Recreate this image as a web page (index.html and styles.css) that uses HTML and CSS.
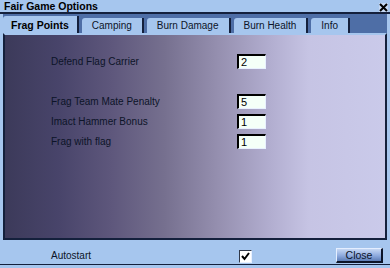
FILE: index.html
```html
<!DOCTYPE html>
<html lang="en">

<head>
    <meta charset="UTF-8">
    <meta name="viewport" content="width=device-width, initial-scale=1.0">
    <title>Fair Game Options</title>
    <link rel="stylesheet" href="styles.css">
</head>

<body>
    <div class="window">
        <div class="titlebar">
            <span class="title">Fair Game Options</span>
            <span class="close-x">
                <svg width="9" height="9" viewBox="0 0 9 9">
                    <path d="M1 1 L8 8 M8 1 L1 8" stroke="#000" stroke-width="2" fill="none" />
                </svg>
            </span>
        </div>
        <div class="frame">
            <div class="tabs">
                <div class="tab active">Frag Points</div>
                <div class="tab">Camping</div>
                <div class="tab">Burn Damage</div>
                <div class="tab">Burn Health</div>
                <div class="tab">Info</div>
            </div>
            <div class="panel">
                <div class="row">
                    <span class="label">Defend Flag Carrier</span>
                    <input class="field" type="text" value="2">
                </div>
                <div class="spacer"></div>
                <div class="row">
                    <span class="label">Frag Team Mate Penalty</span>
                    <input class="field" type="text" value="5">
                </div>
                <div class="row">
                    <span class="label">Imact Hammer Bonus</span>
                    <input class="field" type="text" value="1">
                </div>
                <div class="row">
                    <span class="label">Frag with flag</span>
                    <input class="field" type="text" value="1">
                </div>
            </div>
        </div>
        <div class="bottombar">
            <span class="label autostart">Autostart</span>
            <span class="checkbox">
                <svg width="11" height="11" viewBox="0 0 11 11">
                    <path d="M2 5 L4.5 8 L9 2" stroke="#000" stroke-width="2" fill="none" />
                </svg>
            </span>
            <button class="close-btn">Close</button>
        </div>
    </div>
</body>

</html>
```

FILE: styles.css
```css
body {
    margin: 0;
    padding: 0;
    background-color: #a6c6ee;
    font-family: "Liberation Sans", Arial, sans-serif;
    font-size: 10px;
    color: #0c1428;
}

.window {
    display: flex;
    flex-direction: column;
    width: 390px;
    height: 268px;
}

.titlebar {
    display: flex;
    justify-content: space-between;
    align-items: center;
    height: 12px;
    padding: 0 2px 0 4px;
    border-bottom: 2px solid #14203c;
}

.title {
    font-weight: bold;
    font-size: 10.5px;
    color: #000;
}

.close-x {
    display: flex;
    width: 9px;
    height: 9px;
    margin-top: 2px;
    background-color: #c4d8f4;
}

.frame {
    display: flex;
    flex-direction: column;
    flex: 1;
    margin: 0 3px;
}

.tabs {
    display: flex;
    align-items: flex-end;
    gap: 3px;
    height: 19px;
    background-color: #4e6ea6;
}

.tab {
    height: 15px;
    line-height: 15px;
    padding: 0 10px;
    background-color: #a6c6ee;
    border-right: 2px solid #14203c;
    border-top-left-radius: 3px;
    font-size: 10px;
}

.tab.active {
    height: 17px;
    line-height: 18px;
    padding: 0 8px;
    font-weight: bold;
    font-size: 10.5px;
    color: #000;
}

.panel {
    flex: 1;
    padding: 19px 0 0 46px;
    border-top: 2px solid #a6c6ee;
    border-left: 2px solid #14203c;
    border-right: 2px solid #14203c;
    border-bottom: 2px solid #14203c;
    background: linear-gradient(to right, #3c3a5a 0%, #48446a 14%, #5e577c 28%, #76708f 42%, #958faf 56%, #b2aed0 70%, #c6c4e4 80%, #cacaea 100%);
}

.row {
    display: flex;
    align-items: center;
    height: 15px;
    margin-bottom: 5px;
}

.spacer {
    height: 20px;
}

.label {
    width: 186px;
    color: #0c1428;
}

.field {
    box-sizing: border-box;
    width: 29px;
    height: 15px;
    margin: 0;
    padding: 0 0 0 2px;
    border-style: solid;
    border-width: 2px 1px 1px 2px;
    border-color: #000 #e8f0ff #e8f0ff #000;
    background-color: #f4fff8;
    font-family: "Liberation Sans", Arial, sans-serif;
    font-size: 11px;
    color: #000;
    outline: none;
}

.bottombar {
    display: flex;
    align-items: center;
    height: 19px;
    padding: 5px 7px 0 51px;
    border-bottom: 1px solid #14203c;
    margin-bottom: 3px;
}

.autostart {
    width: 188px;
    padding-top: 2px;
}

.checkbox {
    box-sizing: border-box;
    display: flex;
    align-items: center;
    justify-content: center;
    width: 13px;
    height: 13px;
    margin-top: 3px;
    border-style: solid;
    border-width: 1px;
    border-color: #303848 #e8f0ff #e8f0ff #303848;
    background-color: #fff;
}

.close-btn {
    box-sizing: border-box;
    width: 47px;
    height: 15px;
    margin: 1px 0 0 auto;
    padding: 0;
    border-style: solid;
    border-width: 1px 2px 2px 1px;
    border-color: #e4eeff #0c1428 #0c1428 #e4eeff;
    background: linear-gradient(to bottom, #c6d8f4 0%, #8eaade 55%, #5c7cb6 100%);
    font-family: "Liberation Sans", Arial, sans-serif;
    font-size: 10.5px;
    color: #0c1428;
}
```
